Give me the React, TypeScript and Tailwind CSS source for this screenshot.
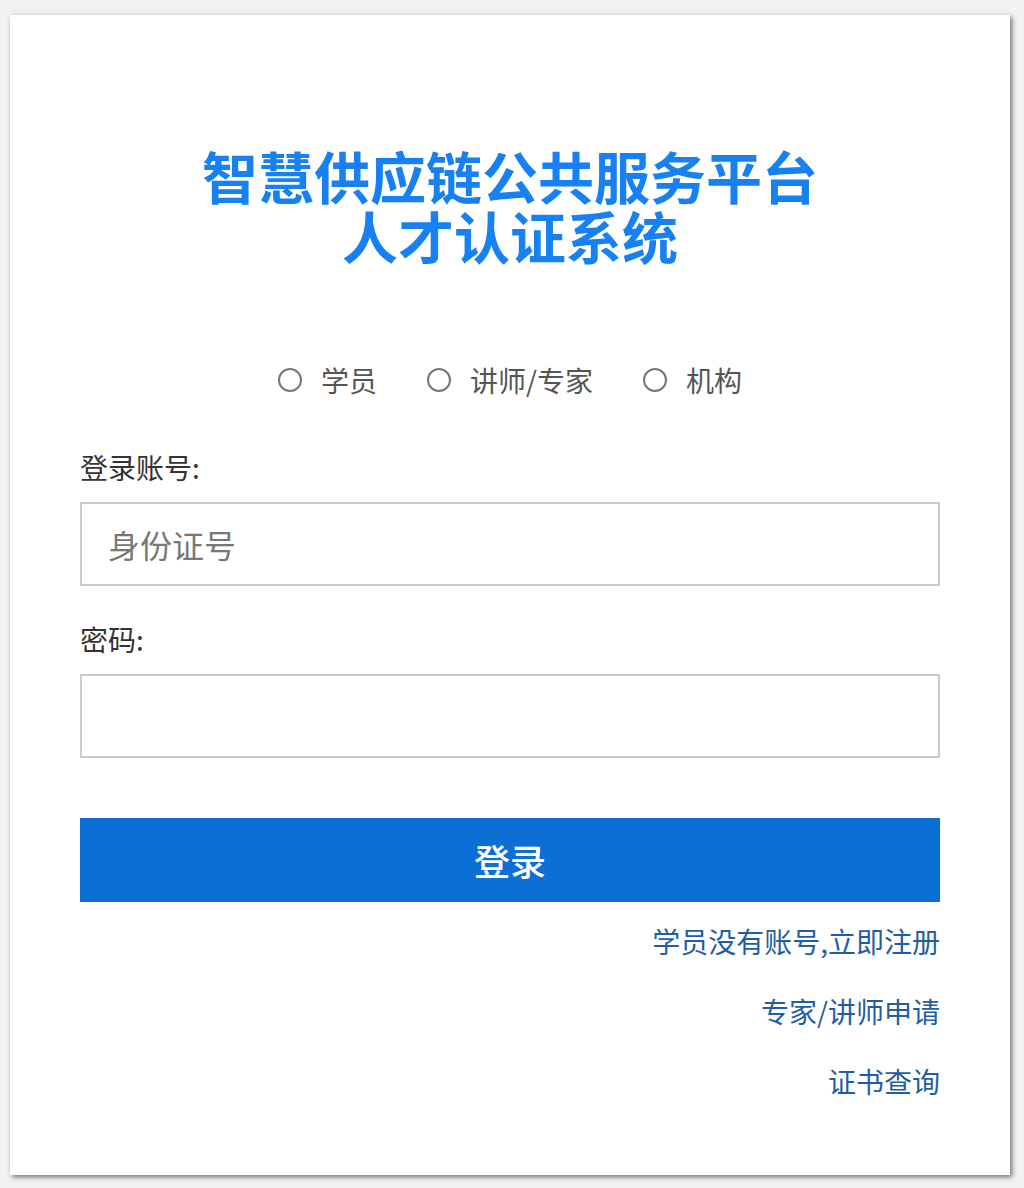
import React from "react";

const roles = ["学员", "讲师/专家", "机构"];

const links = ["学员没有账号,立即注册", "专家/讲师申请", "证书查询"];

export default function App() {
  return (
    <div
      className="min-h-[1188px] bg-[#f2f2f2] pt-[15px] pl-[10px]"
      style={{ fontFamily: '"Noto Sans CJK SC", "Noto Sans", sans-serif' }}
    >
      <div className="w-[1000px] h-[1160px] bg-white shadow-[2px_2px_5px_rgba(0,0,0,0.55)] px-[70px] pt-[130px]">
        {/* Title */}
        <h1 className="text-center text-[56px] font-bold text-[#1780f2]">
          <div className="h-[60px] leading-[60px]">智慧供应链公共服务平台</div>
          <div className="h-[60px] leading-[60px]">人才认证系统</div>
        </h1>

        {/* Role selection */}
        <div className="mt-[95px] flex h-[40px] items-center justify-center gap-[50px]">
          {roles.map((role) => (
            <label key={role} className="flex items-center gap-[19px] cursor-pointer">
              <span className="block h-[24px] w-[24px] rounded-full border-2 border-[#777]" />
              <span className="text-[28px] leading-[40px] text-[#555]">{role}</span>
            </label>
          ))}
        </div>

        {/* Account */}
        <div className="mt-[47px] text-[28px] leading-[40px] text-[#333]">登录账号:</div>
        <div className="mt-[15px] flex h-[84px] items-center border-2 border-[#ccc] pl-[26px]">
          <span className="text-[32px] text-[#777]">身份证号</span>
        </div>

        {/* Password */}
        <div className="mt-[33px] text-[28px] leading-[40px] text-[#333]">密码:</div>
        <div className="mt-[15px] h-[84px] border-2 border-[#ccc]" />

        {/* Submit */}
        <button className="mt-[60px] flex h-[84px] w-full items-center justify-center bg-[#0b6fd6] text-[36px] font-medium text-white">
          登录
        </button>

        {/* Links */}
        <div className="mt-[19px] flex flex-col items-end gap-[30px]">
          {links.map((text) => (
            <a key={text} className="text-[28px] leading-[40px] text-[#1f5ea4] cursor-pointer">
              {text}
            </a>
          ))}
        </div>
      </div>
    </div>
  );
}
